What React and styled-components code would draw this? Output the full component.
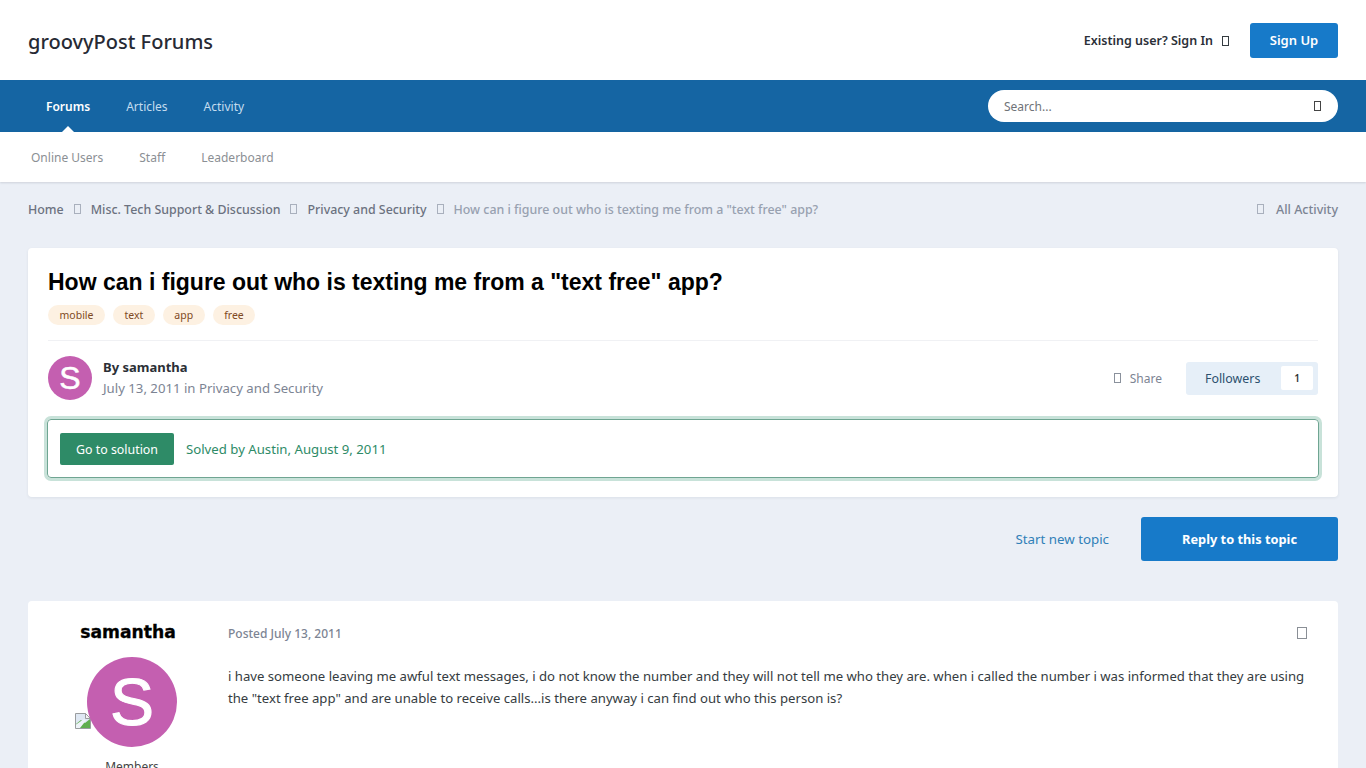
import React from "react"
import styled, { createGlobalStyle } from "styled-components"

const GlobalStyle = createGlobalStyle`
  html, body {
    margin: 0;
    height: 768px;
    overflow: hidden;
  }
  body {
    background: #ebeff6;
    font-family: "Noto Sans", "Open Sans", sans-serif;
    font-size: 13px;
    color: #353c41;
  }
  * {
    box-sizing: border-box;
  }
`

const primaryNav = ["Forums", "Articles", "Activity"]
const subNav = ["Online Users", "Staff", "Leaderboard"]
const tags = ["mobile", "text", "app", "free"]

function BrokenImage() {
  return (
    <BrokenIcon viewBox="0 0 16 16" width="16" height="16">
      <path d="M0.5 0.5H10.5L15.5 5.5V15.5H0.5Z" fill="#dfe8f3" stroke="#9a9d9f" />
      <path d="M10.5 0.5V5.5H15.5Z" fill="#f4f4f4" stroke="#9a9d9f" />
      <path d="M1 15L1 11L6 7L10 10L15 6V15Z" fill="#5fae4e" />
      <path d="M1 15L1 11.5L9 6L11 7.5L5 15Z" fill="#eef3f8" />
    </BrokenIcon>
  )
}

export default function App() {
  return (
    <>
      <GlobalStyle />
      <Header>
        <Logo>groovyPost Forums</Logo>
        <UserLinks>
          <SignIn>
            Existing user? Sign In <Tofu $color="#353c41" />
          </SignIn>
          <SignUp>Sign Up</SignUp>
        </UserLinks>
      </Header>

      <PrimaryBar>
        <PrimaryLinks>
          {primaryNav.map((item, i) => (
            <PrimaryLink key={item} $active={i === 0}>
              {item}
            </PrimaryLink>
          ))}
        </PrimaryLinks>
        <SearchBox>
          <span>Search...</span>
          <Tofu $color="#444" />
        </SearchBox>
      </PrimaryBar>

      <SubBar>
        {subNav.map((item) => (
          <SubLink key={item}>{item}</SubLink>
        ))}
      </SubBar>

      <Main>
        <Breadcrumb>
          <Crumbs>
            <Crumb>Home</Crumb>
            <Tofu $color="#a9b0bd" />
            <Crumb>Misc. Tech Support &amp; Discussion</Crumb>
            <Tofu $color="#a9b0bd" />
            <Crumb>Privacy and Security</Crumb>
            <Tofu $color="#a9b0bd" />
            <Crumb $current>How can i figure out who is texting me from a "text free" app?</Crumb>
          </Crumbs>
          <AllActivity>
            <Tofu $color="#a9b0bd" />
            All Activity
          </AllActivity>
        </Breadcrumb>

        <TopicCard>
          <Title>How can i figure out who is texting me from a "text free" app?</Title>
          <TagRow>
            {tags.map((tag) => (
              <Tag key={tag}>{tag}</Tag>
            ))}
          </TagRow>
          <Divider />
          <MetaRow>
            <Author>
              <Avatar $size={44}>S</Avatar>
              <AuthorText>
                <AuthorName>By samantha</AuthorName>
                <AuthorDate>July 13, 2011 in Privacy and Security</AuthorDate>
              </AuthorText>
            </Author>
            <MetaActions>
              <Share>
                <Tofu $color="#8a919c" />
                Share
              </Share>
              <Followers>
                Followers
                <FollowerCount>1</FollowerCount>
              </Followers>
            </MetaActions>
          </MetaRow>
          <SolutionBox>
            <SolutionButton>Go to solution</SolutionButton>
            <SolvedText>Solved by Austin, August 9, 2011</SolvedText>
          </SolutionBox>
        </TopicCard>

        <TopicActions>
          <StartTopic>Start new topic</StartTopic>
          <ReplyButton>Reply to this topic</ReplyButton>
        </TopicActions>

        <PostCard>
          <PostAuthor>
            <PosterName>samantha</PosterName>
            <PosterPhoto>
              <BrokenImage />
              <Avatar $size={90}>S</Avatar>
            </PosterPhoto>
            <PosterGroup>Members</PosterGroup>
          </PostAuthor>
          <PostBody>
            <PostHead>
              <PostDate>Posted July 13, 2011</PostDate>
              <PostMenu>
                <Tofu $color="#8a8f96" $large />
              </PostMenu>
            </PostHead>
            <PostText>
              i have someone leaving me awful text messages, i do not know the number and they will
              not tell me who they are. when i called the number i was informed that they are using
              the "text free app" and are unable to receive calls...is there anyway i can find out
              who this person is?
            </PostText>
          </PostBody>
        </PostCard>
      </Main>
    </>
  )
}

const Tofu = styled.i`
  display: inline-block;
  flex: none;
  width: ${(props) => (props.$large ? "10px" : "7px")};
  height: ${(props) => (props.$large ? "12px" : "10px")};
  border: 1px solid ${(props) => props.$color};
`

const Header = styled.header`
  height: 80px;
  padding: 2px 28px 0;
  background: #fff;
  display: flex;
  align-items: center;
  justify-content: space-between;
`

const Logo = styled.div`
  font-size: 20px;
  font-weight: 500;
  color: #272a34;
`

const UserLinks = styled.div`
  display: flex;
  align-items: center;
  gap: 21px;
  margin-top: -2px;
`

const SignIn = styled.div`
  padding-top: 1px;
  display: flex;
  align-items: center;
  gap: 9px;
  font-size: 12.5px;
  font-weight: 600;
  color: #2b3038;
`

const SignUp = styled.div`
  width: 88px;
  height: 35px;
  border-radius: 3px;
  background: #177ac9;
  color: #fff;
  font-size: 13px;
  font-weight: 600;
  display: flex;
  align-items: center;
  justify-content: center;
`

const PrimaryBar = styled.nav`
  height: 52px;
  padding: 0 28px 0 28px;
  background: #1565a3;
  display: flex;
  align-items: center;
  justify-content: space-between;
`

const PrimaryLinks = styled.div`
  display: flex;
  align-items: center;
  height: 100%;
`

const PrimaryLink = styled.div`
  position: relative;
  height: 100%;
  padding: 0 18px;
  display: flex;
  align-items: center;
  font-size: 12px;
  font-weight: ${(props) => (props.$active ? 600 : 400)};
  color: ${(props) => (props.$active ? "#fff" : "#c4dcef")};

  &::after {
    content: "";
    display: ${(props) => (props.$active ? "block" : "none")};
    position: absolute;
    left: 50%;
    bottom: 0;
    margin-left: -6px;
    border: 6px solid transparent;
    border-top: 0;
    border-bottom-color: #fff;
  }
`

const SearchBox = styled.div`
  width: 350px;
  height: 32px;
  border-radius: 16px;
  background: #fff;
  padding: 0 17px 0 16px;
  display: flex;
  align-items: center;
  justify-content: space-between;
  font-size: 12px;
  color: #6f7378;
`

const SubBar = styled.div`
  height: 50px;
  padding: 0 13px;
  background: #fff;
  box-shadow: 0 1px 2px rgba(40, 50, 70, 0.15);
  display: flex;
  align-items: center;
`

const SubLink = styled.div`
  padding: 0 18px;
  font-size: 12px;
  color: #8b8f94;
`

const Main = styled.main`
  padding: 0 28px;
`

const Breadcrumb = styled.div`
  height: 54px;
  margin-bottom: 12px;
  display: flex;
  align-items: center;
  justify-content: space-between;
  font-size: 12.4px;
  font-weight: 500;
`

const Crumbs = styled.div`
  display: flex;
  align-items: center;
  gap: 10px;
`

const Crumb = styled.span`
  color: ${(props) => (props.$current ? "#98a1b0" : "#6b7280")};
`

const AllActivity = styled.div`
  display: flex;
  align-items: center;
  gap: 12px;
  font-size: 12.5px;
  color: #7c8493;
`

const TopicCard = styled.section`
  height: 249px;
  padding: 20px;
  background: #fff;
  border-radius: 4px;
  box-shadow: 0 1px 3px rgba(40, 50, 70, 0.08);
`

const Title = styled.h1`
  margin: 0;
  font-family: "Liberation Sans", Arial, sans-serif;
  font-size: 23px;
  line-height: 28px;
  font-weight: 700;
  color: #000;
`

const TagRow = styled.div`
  display: flex;
  gap: 8px;
  margin-top: 9px;
`

const Tag = styled.span`
  height: 20px;
  padding: 0 11.5px;
  border-radius: 10px;
  background: #fdf1e2;
  color: #7f4a24;
  font-size: 10.5px;
  display: flex;
  align-items: center;
`

const Divider = styled.div`
  height: 1px;
  margin-top: 15px;
  background: #f0f1f4;
`

const MetaRow = styled.div`
  margin-top: 15px;
  height: 44px;
  display: flex;
  align-items: center;
  justify-content: space-between;
`

const Author = styled.div`
  display: flex;
  align-items: center;
  gap: 11px;
`

const Avatar = styled.div`
  position: relative;
  width: ${(props) => props.$size}px;
  height: ${(props) => props.$size}px;
  border-radius: 50%;
  background: #c45fb0;
  color: #fff;
  font-family: "Liberation Sans", Arial, sans-serif;
  font-size: ${(props) => Math.round(props.$size * 0.73)}px;
  -webkit-text-stroke: ${(props) => props.$size * 0.012}px #fff;
  display: flex;
  align-items: center;
  justify-content: center;
`

const AuthorText = styled.div`
  display: flex;
  flex-direction: column;
  gap: 3px;
  margin-top: -2px;
`

const AuthorName = styled.div`
  font-size: 13px;
  line-height: 18px;
  font-weight: 700;
  color: #2b2f36;
`

const AuthorDate = styled.div`
  font-size: 13.2px;
  line-height: 18px;
  color: #7c8493;
`

const MetaActions = styled.div`
  display: flex;
  align-items: center;
  gap: 24px;
`

const Share = styled.div`
  display: flex;
  align-items: center;
  gap: 9px;
  font-size: 12px;
  color: #7c8493;
`

const Followers = styled.div`
  width: 132px;
  height: 33px;
  padding: 0 5px 0 19px;
  border-radius: 3px;
  background: #e6eff8;
  color: #2c4f6e;
  font-size: 12.4px;
  display: flex;
  align-items: center;
  justify-content: space-between;
`

const FollowerCount = styled.span`
  width: 32px;
  height: 24px;
  border-radius: 2px;
  background: #fff;
  color: #333;
  font-size: 10px;
  font-weight: 600;
  display: flex;
  align-items: center;
  justify-content: center;
`

const SolutionBox = styled.div`
  height: 59px;
  margin: 19px -1px 0;
  padding: 0 12px;
  border: 1px solid #6fa592;
  border-radius: 4px;
  box-shadow: 0 0 0 3px #c8e2d9;
  display: flex;
  align-items: center;
  gap: 12px;
`

const SolutionButton = styled.div`
  width: 114px;
  height: 32px;
  padding-top: 1px;
  border-radius: 2px;
  background: #2e8b67;
  color: #fff;
  font-size: 12.4px;
  display: flex;
  align-items: center;
  justify-content: center;
`

const SolvedText = styled.span`
  font-size: 13.2px;
  color: #2e8b67;
`

const TopicActions = styled.div`
  margin-top: 20px;
  display: flex;
  align-items: center;
  justify-content: flex-end;
  gap: 32px;
`

const StartTopic = styled.span`
  font-size: 13.3px;
  color: #3080b8;
`

const ReplyButton = styled.div`
  width: 197px;
  height: 44px;
  border-radius: 3px;
  background: #177ac9;
  color: #fff;
  font-size: 12.8px;
  font-weight: 700;
  display: flex;
  align-items: center;
  justify-content: center;
`

const PostCard = styled.article`
  margin-top: 40px;
  height: 400px;
  background: #fff;
  border-radius: 4px;
  display: flex;
`

const PostAuthor = styled.aside`
  width: 200px;
  padding-top: 20px;
  display: flex;
  flex-direction: column;
  align-items: center;
`

const PosterName = styled.div`
  font-family: "DejaVu Sans", Verdana, sans-serif;
  font-size: 17.2px;
  line-height: 22px;
  font-weight: 700;
  color: #000;
  -webkit-text-stroke: 0.3px #000;
`

const PosterPhoto = styled.div`
  position: relative;
  margin-top: 14px;
  margin-left: 8px;
`

const BrokenIcon = styled.svg`
  position: absolute;
  left: -12px;
  top: 56px;
`

const PosterGroup = styled.div`
  margin-top: 12px;
  margin-left: 8px;
  font-size: 12px;
  line-height: 16px;
  color: #444;
`

const PostBody = styled.div`
  flex: 1;
  padding: 24px 31px 0 0;
`

const PostHead = styled.div`
  display: flex;
  align-items: center;
  justify-content: space-between;
`

const PostDate = styled.span`
  font-size: 12px;
  line-height: 18px;
  font-weight: 500;
  color: #7c8493;
`

const PostMenu = styled.span`
  display: flex;
  margin-top: -2px;
`

const PostText = styled.p`
  margin: 22px -1px 0 0;
  font-size: 13.15px;
  line-height: 22px;
  color: #353c41;
`
